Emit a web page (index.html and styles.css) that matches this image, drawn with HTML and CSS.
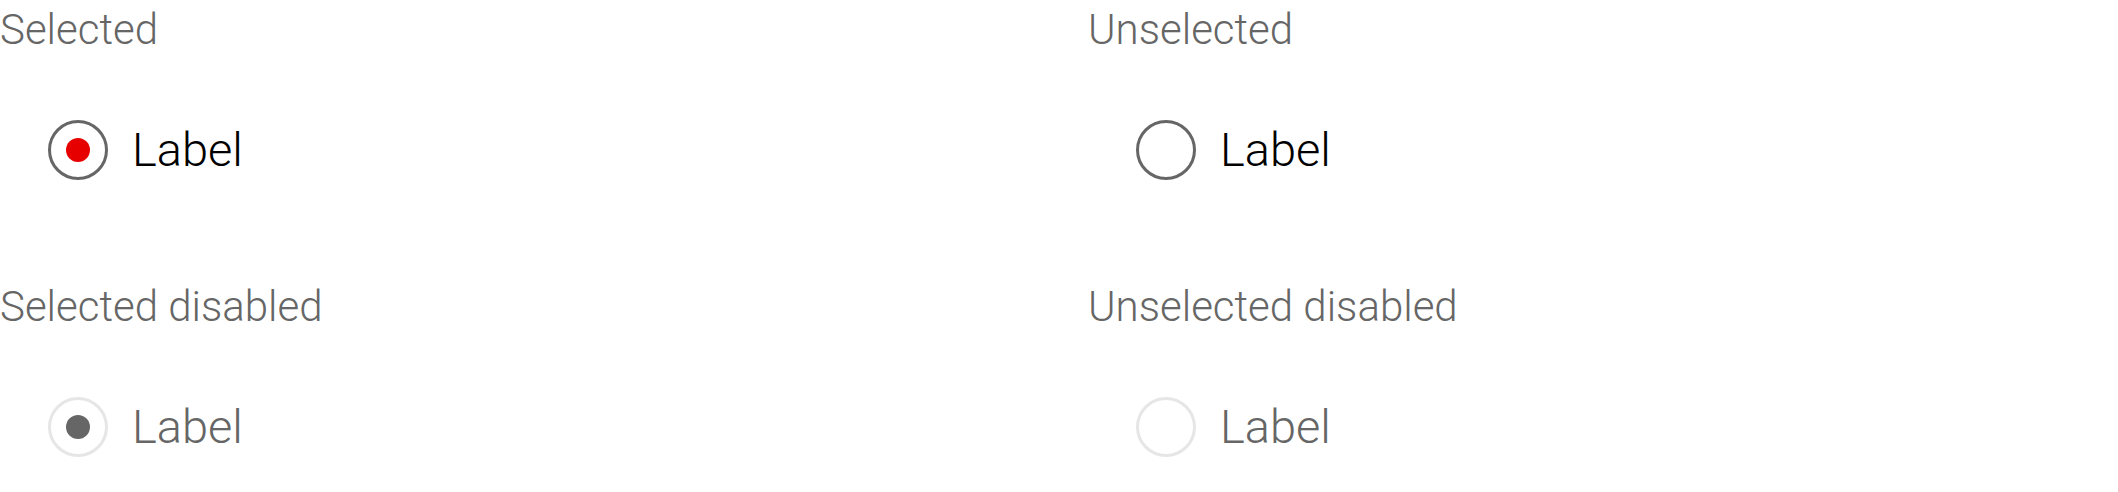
FILE: index.html
```html
<!DOCTYPE html>
<html lang="en">
<head>
<meta charset="utf-8">
<title>Radio states</title>
<link rel="stylesheet" href="styles.css">
</head>
<body>
<div class="grid">
  <section class="cell">
    <div class="heading">Selected</div>
    <label class="option">
      <span class="radio checked"><span class="dot"></span></span>
      <span class="label">Label</span>
    </label>
  </section>
  <section class="cell">
    <div class="heading">Unselected</div>
    <label class="option">
      <span class="radio"></span>
      <span class="label">Label</span>
    </label>
  </section>
  <section class="cell">
    <div class="heading">Selected disabled</div>
    <label class="option disabled">
      <span class="radio checked"><span class="dot"></span></span>
      <span class="label">Label</span>
    </label>
  </section>
  <section class="cell">
    <div class="heading">Unselected disabled</div>
    <label class="option disabled">
      <span class="radio"></span>
      <span class="label">Label</span>
    </label>
  </section>
</div>
</body>
</html>
```

FILE: styles.css
```css
html, body {
  margin: 0;
  padding: 0;
  background: #ffffff;
}

body {
  font-family: Roboto, "Liberation Sans", sans-serif;
  font-weight: 300;
}

.grid {
  display: grid;
  grid-template-columns: 1088px 1fr;
  grid-template-rows: 277px auto;
}

.cell {
  display: flex;
  flex-direction: column;
}

.heading {
  font-size: 42px;
  line-height: 60px;
  color: #666666;
}

.option {
  display: flex;
  align-items: center;
  gap: 24px;
  margin-top: 60px;
  padding-left: 48px;
}

.radio {
  box-sizing: border-box;
  width: 60px;
  height: 60px;
  border: 3px solid #666666;
  border-radius: 50%;
  display: flex;
  align-items: center;
  justify-content: center;
  flex: none;
}

.dot {
  width: 24px;
  height: 24px;
  border-radius: 50%;
  background: #e60000;
}

.label {
  font-size: 47px;
  line-height: 60px;
  color: #000000;
}

.option.disabled .radio {
  border-color: #e6e6e6;
}

.option.disabled .dot {
  background: #666666;
}

.option.disabled .label {
  color: #666666;
}
```
